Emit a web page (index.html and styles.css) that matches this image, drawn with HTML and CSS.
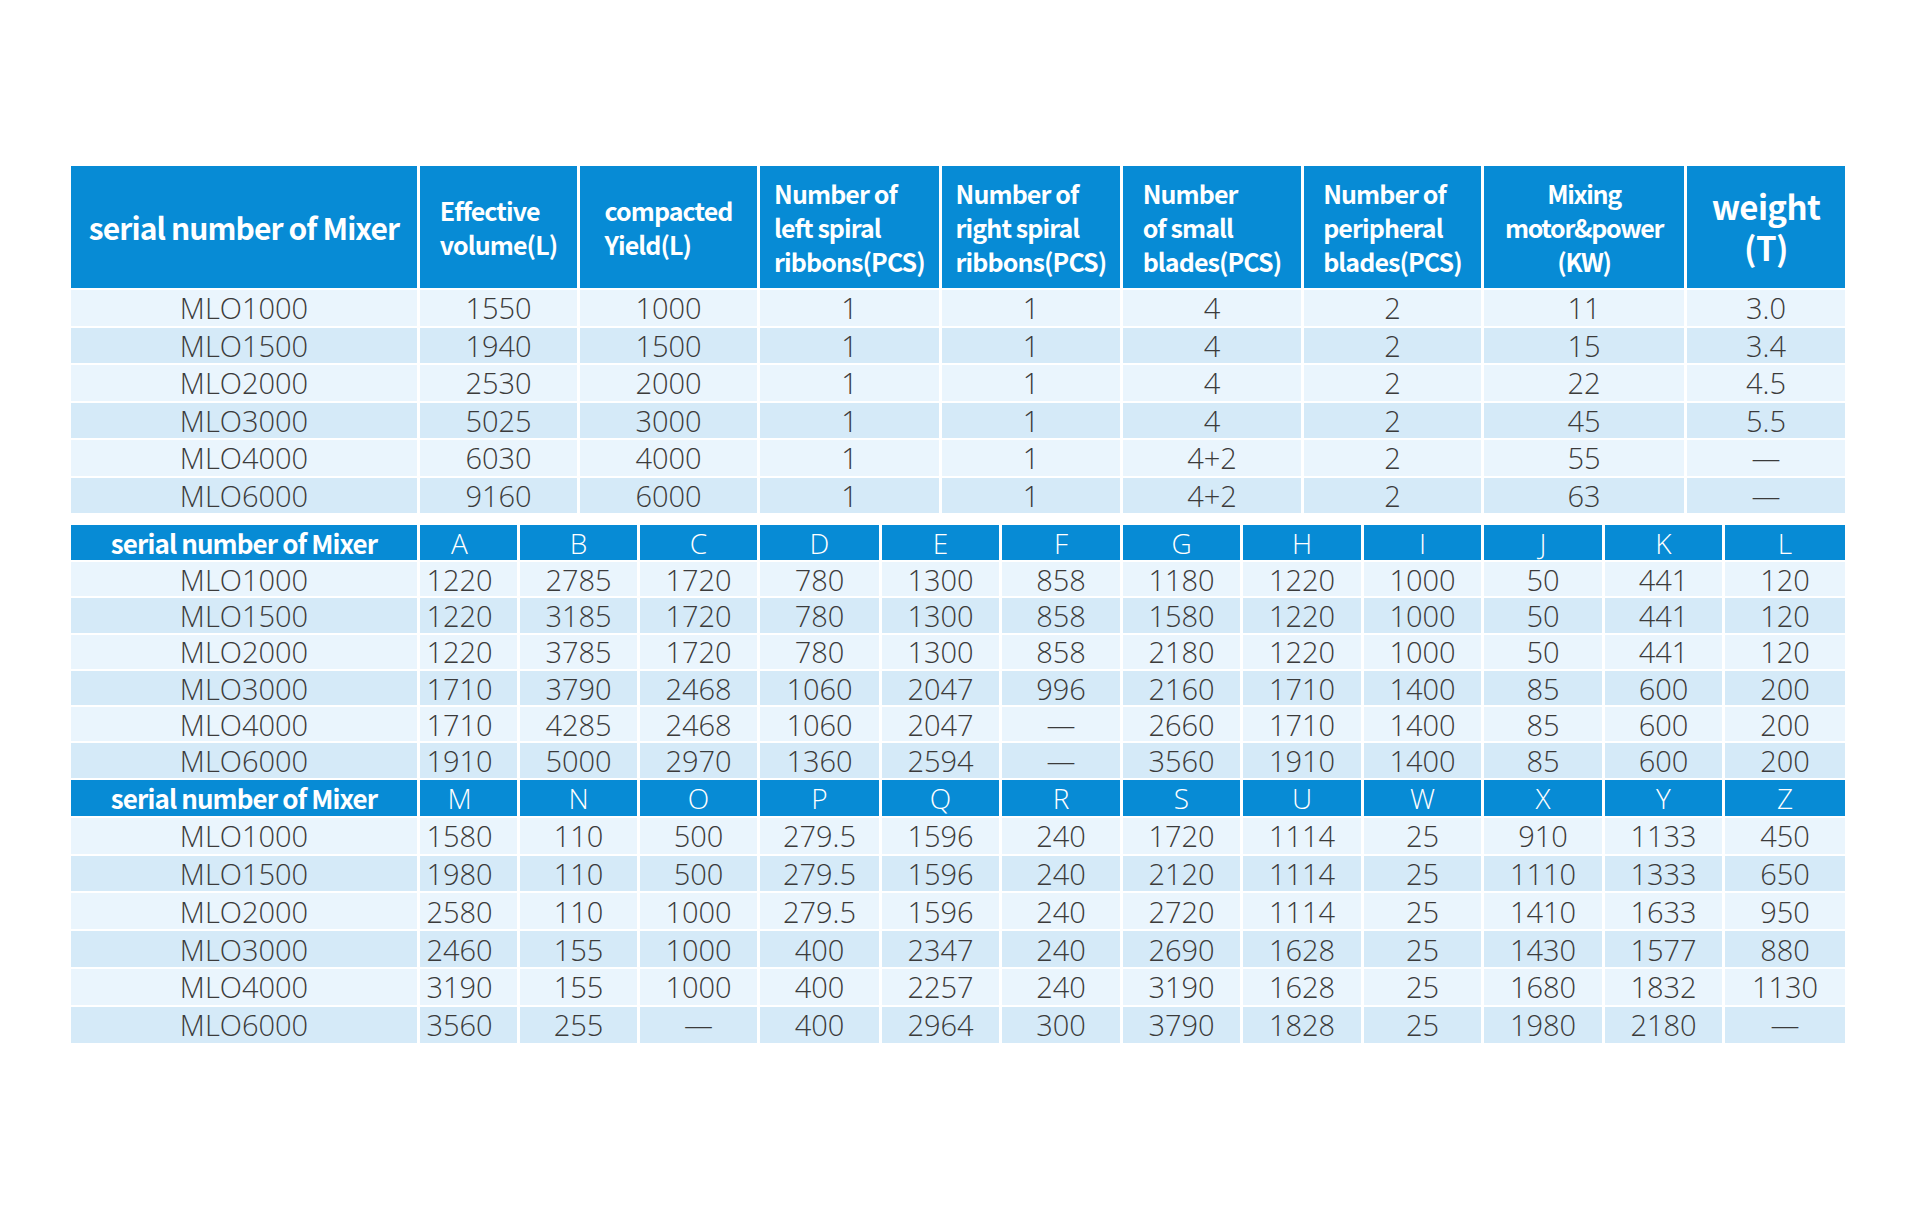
FILE: index.html
```html
<!DOCTYPE html>
<html lang="en">
<head>
<meta charset="utf-8">
<title>MLO Mixer specifications</title>
<link rel="stylesheet" href="styles.css">
</head>
<body>
<main class="sheet">
  <section class="spec">
    <div class="row head">
      <div class="h-main">serial number of Mixer</div>
      <div class="h-txt"><span>Effective<br>volume(L)</span></div>
      <div class="h-txt"><span>compacted<br>Yield(L)</span></div>
      <div class="h-txt"><span>Number of<br>left spiral<br>ribbons(PCS)</span></div>
      <div class="h-txt"><span>Number of<br>right spiral<br>ribbons(PCS)</span></div>
      <div class="h-txt"><span>Number<br>of small<br>blades(PCS)</span></div>
      <div class="h-txt"><span>Number of<br>peripheral<br>blades(PCS)</span></div>
      <div class="h-txt h-center"><span>Mixing<br>motor&amp;power<br>(KW)</span></div>
      <div class="h-txt h-big"><span>weight<br>(T)</span></div>
    </div>
    <div class="row"><div>MLO1000</div><div>1550</div><div>1000</div><div>1</div><div>1</div><div>4</div><div>2</div><div>11</div><div>3.0</div></div>
    <div class="row alt"><div>MLO1500</div><div>1940</div><div>1500</div><div>1</div><div>1</div><div>4</div><div>2</div><div>15</div><div>3.4</div></div>
    <div class="row"><div>MLO2000</div><div>2530</div><div>2000</div><div>1</div><div>1</div><div>4</div><div>2</div><div>22</div><div>4.5</div></div>
    <div class="row alt"><div>MLO3000</div><div>5025</div><div>3000</div><div>1</div><div>1</div><div>4</div><div>2</div><div>45</div><div>5.5</div></div>
    <div class="row"><div>MLO4000</div><div>6030</div><div>4000</div><div>1</div><div>1</div><div>4+2</div><div>2</div><div>55</div><div>—</div></div>
    <div class="row alt"><div>MLO6000</div><div>9160</div><div>6000</div><div>1</div><div>1</div><div>4+2</div><div>2</div><div>63</div><div>—</div></div>
  </section>

  <section class="dims">
    <div class="row head letters">
      <div class="h-sub">serial number of Mixer</div>
      <div class="first">A</div><div>B</div><div>C</div><div>D</div><div>E</div><div>F</div><div>G</div><div>H</div><div>I</div><div>J</div><div>K</div><div>L</div>
    </div>
    <div class="row"><div>MLO1000</div><div class="first">1220</div><div>2785</div><div>1720</div><div>780</div><div>1300</div><div>858</div><div>1180</div><div>1220</div><div>1000</div><div>50</div><div>441</div><div>120</div></div>
    <div class="row alt"><div>MLO1500</div><div class="first">1220</div><div>3185</div><div>1720</div><div>780</div><div>1300</div><div>858</div><div>1580</div><div>1220</div><div>1000</div><div>50</div><div>441</div><div>120</div></div>
    <div class="row"><div>MLO2000</div><div class="first">1220</div><div>3785</div><div>1720</div><div>780</div><div>1300</div><div>858</div><div>2180</div><div>1220</div><div>1000</div><div>50</div><div>441</div><div>120</div></div>
    <div class="row alt"><div>MLO3000</div><div class="first">1710</div><div>3790</div><div>2468</div><div>1060</div><div>2047</div><div>996</div><div>2160</div><div>1710</div><div>1400</div><div>85</div><div>600</div><div>200</div></div>
    <div class="row"><div>MLO4000</div><div class="first">1710</div><div>4285</div><div>2468</div><div>1060</div><div>2047</div><div>—</div><div>2660</div><div>1710</div><div>1400</div><div>85</div><div>600</div><div>200</div></div>
    <div class="row alt"><div>MLO6000</div><div class="first">1910</div><div>5000</div><div>2970</div><div>1360</div><div>2594</div><div>—</div><div>3560</div><div>1910</div><div>1400</div><div>85</div><div>600</div><div>200</div></div>

    <div class="row head letters">
      <div class="h-sub">serial number of Mixer</div>
      <div class="first">M</div><div>N</div><div>O</div><div>P</div><div>Q</div><div>R</div><div>S</div><div>U</div><div>W</div><div>X</div><div>Y</div><div>Z</div>
    </div>
    <div class="row"><div>MLO1000</div><div class="first">1580</div><div>110</div><div>500</div><div>279.5</div><div>1596</div><div>240</div><div>1720</div><div>1114</div><div>25</div><div>910</div><div>1133</div><div>450</div></div>
    <div class="row alt"><div>MLO1500</div><div class="first">1980</div><div>110</div><div>500</div><div>279.5</div><div>1596</div><div>240</div><div>2120</div><div>1114</div><div>25</div><div>1110</div><div>1333</div><div>650</div></div>
    <div class="row"><div>MLO2000</div><div class="first">2580</div><div>110</div><div>1000</div><div>279.5</div><div>1596</div><div>240</div><div>2720</div><div>1114</div><div>25</div><div>1410</div><div>1633</div><div>950</div></div>
    <div class="row alt"><div>MLO3000</div><div class="first">2460</div><div>155</div><div>1000</div><div>400</div><div>2347</div><div>240</div><div>2690</div><div>1628</div><div>25</div><div>1430</div><div>1577</div><div>880</div></div>
    <div class="row"><div>MLO4000</div><div class="first">3190</div><div>155</div><div>1000</div><div>400</div><div>2257</div><div>240</div><div>3190</div><div>1628</div><div>25</div><div>1680</div><div>1832</div><div>1130</div></div>
    <div class="row alt"><div>MLO6000</div><div class="first">3560</div><div>255</div><div>—</div><div>400</div><div>2964</div><div>300</div><div>3790</div><div>1828</div><div>25</div><div>1980</div><div>2180</div><div>—</div></div>
  </section>
</main>
</body>
</html>
```

FILE: styles.css
```css
html, body {
  margin: 0;
  padding: 0;
  background: #ffffff;
}

body {
  font-family: "Open Sans", Roboto, "Noto Sans", "Liberation Sans", sans-serif;
  color: #3b3b3b;
}

.sheet {
  padding: 166px 0 0 71px;
  width: 1774px;
}

.spec,
.dims {
  display: grid;
  column-gap: 3px;
  row-gap: 2px;
}

.spec {
  grid-template-columns: 346px 157px 177px 179px 178px 178px 177px 200px 158px;
  grid-template-rows: 122px repeat(6, 35.5px);
}

.dims {
  margin-top: 12px;
  grid-template-columns: 346px 97px 117px 117px 119px 117px 118px 117px 118px 117px 118px 117px 120px;
  grid-template-rows: 35px repeat(6, 34.3px) 36px repeat(6, 35.8px);
}

.row {
  display: contents;
}

.row > div {
  display: flex;
  align-items: center;
  justify-content: center;
  background: #eaf5fd;
  font-weight: 300;
  font-size: 29px;
  line-height: 1;
  white-space: nowrap;
}

.row.alt > div {
  background: #d5eaf8;
}

.row > div.first {
  padding-right: 18px;
}

.row.head > div {
  background: #078bd5;
  color: #ffffff;
}

.letters > div {
  font-size: 28px;
  font-weight: 300;
}

.row.head > .h-main,
.row.head > .h-sub,
.row.head > .h-txt {
  font-family: "Noto Sans CJK KR", "Noto Sans", sans-serif;
  font-weight: 700;
}

.row.head > .h-main {
  font-size: 30px;
  letter-spacing: -0.9px;
}

.row.head > .h-sub {
  font-size: 26px;
  letter-spacing: -0.9px;
}

.row.head > .h-txt {
  font-size: 25px;
  letter-spacing: -0.9px;
  line-height: 34px;
}

.h-txt > span {
  display: inline-block;
  text-align: left;
}

.row.head > .h-center {
  letter-spacing: -1.3px;
}

.h-center > span {
  text-align: center;
}

.row.head > .h-big {
  font-size: 33px;
  line-height: 41px;
  letter-spacing: -0.6px;
}

.h-big > span {
  text-align: center;
}
```
